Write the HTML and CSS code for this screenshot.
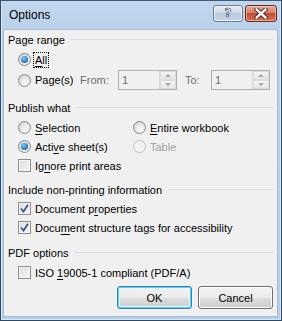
FILE: index.html
```html
<!DOCTYPE html>
<html>
<head>
<meta charset="utf-8">
<link rel="stylesheet" href="styles.css">
</head>
<body>
<div class="window">
  <div class="titlebar">
    <span class="title">Options</span>
    <div class="tbtns">
      <div class="tbtn help"><span class="qglyph">?</span></div>
      <div class="tbtn close">
        <svg width="14" height="11" viewBox="0 0 14 11"><path d="M2.5 1.5 L11.5 9.5 M11.5 1.5 L2.5 9.5" stroke="#4a1a12" stroke-width="4.2" stroke-linecap="square"/><path d="M2.5 1.5 L11.5 9.5 M11.5 1.5 L2.5 9.5" stroke="#fff" stroke-width="2.4" stroke-linecap="square"/></svg>
      </div>
    </div>
  </div>
  <div class="client">
    <div class="ghead g1"><span>Page range</span><i></i></div>
    <div class="row ind"><span class="radio on"></span><span class="lbl focus"><u>A</u>ll</span></div>
    <div class="row ind pages">
      <span class="radio"></span><span class="lbl w-pages">Page(s)</span>
      <span class="dis w-from">From:</span>
      <span class="spin"><span class="val">1</span><span class="arrows"><b class="up"></b><b class="dn"></b></span></span>
      <span class="dis w-to">To:</span>
      <span class="spin"><span class="val">1</span><span class="arrows"><b class="up"></b><b class="dn"></b></span></span>
    </div>
    <div class="ghead g2"><span>Publish what</span><i></i></div>
    <div class="grid ind">
      <div class="row"><span class="radio"></span><span class="lbl"><u>S</u>election</span></div>
      <div class="row"><span class="radio"></span><span class="lbl"><u>E</u>ntire workbook</span></div>
      <div class="row"><span class="radio on"></span><span class="lbl">Acti<u>v</u>e sheet(s)</span></div>
      <div class="row"><span class="radio disabled"></span><span class="lbl dis2">Table</span></div>
    </div>
    <div class="row ind"><span class="check"></span><span class="lbl">Ig<u>n</u>ore print areas</span></div>
    <div class="ghead g3"><span>Include non-printing information</span><i></i></div>
    <div class="row ind"><span class="check on"><svg width="9" height="9" viewBox="0 0 9 9"><path d="M1 4.5 L3.5 7.5 L8 0.8" fill="none" stroke="#3b4f8a" stroke-width="1.7"/></svg></span><span class="lbl">Document p<u>r</u>operties</span></div>
    <div class="row ind"><span class="check on"><svg width="9" height="9" viewBox="0 0 9 9"><path d="M1 4.5 L3.5 7.5 L8 0.8" fill="none" stroke="#3b4f8a" stroke-width="1.7"/></svg></span><span class="lbl">Docu<u>m</u>ent structure tags for accessibility</span></div>
    <div class="ghead g4"><span>PDF options</span><i></i></div>
    <div class="row ind"><span class="check"></span><span class="lbl">ISO <u>1</u>9005-1 compliant (PDF/A)</span></div>
    <div class="buttons">
      <button class="btn default">OK</button>
      <button class="btn">Cancel</button>
    </div>
  </div>
</div>
</body>
</html>
```

FILE: styles.css
```css
html, body { margin: 0; padding: 0; background: #fff; }
body { font-family: "Liberation Sans", Arial, sans-serif; font-size: 11px; color: #000; }
.window {
  width: 282px; height: 321px; box-sizing: border-box;
  border: 1px solid #2f4a66;
  border-top-color: #3d5c7c;
  background: linear-gradient(#c2d7ed, #b9d1ea 30px, #b6cfe9);
  padding: 0 3px 3px 2px;
  display: flex; flex-direction: column;
  box-shadow: inset 1px 0 0 #d9e7f5, inset -1px 0 0 #d9e7f5, inset 0 -1px 0 #d9e7f5;
}
.titlebar { height: 28px; display: flex; align-items: flex-start; position: relative; }
.title { margin: 6px 0 0 6px; font-size: 12px; color: #000; line-height: 16px; }
.tbtns { margin-left: auto; margin-top: 4px; margin-right: 1px; display: flex; gap: 2px; }
.tbtn { height: 17px; border-radius: 3px; display: flex; align-items: center; justify-content: center; box-sizing: border-box; }
.help { width: 30px; border: 1px solid #6b7f98; background: linear-gradient(#e3ebf4, #cfdbe9 45%, #b9c9dc 50%, #c7d6e7); box-shadow: inset 0 0 0 1px rgba(255,255,255,0.6); }
.qglyph { font-family: "DejaVu Sans", sans-serif; font-weight: bold; font-size: 12px; color: #fff; line-height: 13px; -webkit-text-stroke: 0.6px #394a60; }
.close { width: 32px; border: 1px solid #6d2b21; background: linear-gradient(#e9a99b, #d47f6b 45%, #c14d35 50%, #d6725a); box-shadow: inset 0 0 0 1px rgba(255,220,210,0.5); }
.client {
  flex: 1; background: #f0f0f0; border: 1px solid #a6bdd5;
  padding: 0 4px 0 4px; display: flex; flex-direction: column;
}
.ghead { height: 19px; display: flex; align-items: center; color: #000; }
.ghead i { flex: 1; height: 1px; background: #d5dfe5; margin-left: 6px; }
.g1 { margin-top: 0; }
.g2 { margin-top: 8px; }
.g3 { margin-top: 5px; }
.g4 { margin-top: 6px; }
.row { height: 19px; display: flex; align-items: center; }
.ind { padding-left: 10px; }
.g1 + .row { margin-top: 1px; }
.pages { height: 20px; margin-top: 1px; }
.g2 + .grid { margin-top: 1px; }
.g4 + .row { margin-top: 1px; }
.grid { display: grid; grid-template-columns: 115px 1fr; }
.lbl { margin-left: 4px; line-height: 14px; white-space: nowrap; }
.focus { outline: 1px dotted #000; outline-offset: 0; padding: 0 1px; margin-left: 3px; }
.radio {
  width: 13px; height: 13px; box-sizing: border-box; border-radius: 50%; flex: none;
  border: 1px solid #8a8a8a;
  background: radial-gradient(circle at 60% 65%, #fafafa 0, #e8e8e8 45%, #cfcfcf 80%);
  position: relative;
}
.radio.on::after {
  content: ""; position: absolute; left: 2px; top: 2px; width: 7px; height: 7px; border-radius: 50%;
  background: radial-gradient(circle at 40% 35%, #8ad0f6 0, #3a8fd0 45%, #0e4c8c 100%);
}
.radio.disabled { border-color: #c4c4c4; background: #f2f2f2; }
.check {
  width: 13px; height: 13px; box-sizing: border-box; flex: none; border: 1px solid #8e8f8f;
  background: linear-gradient(135deg, #dcdcdc, #f6f6f6);
  box-shadow: inset 0 0 0 1px #f4f4f4;
  display: flex; align-items: center; justify-content: center;
}
.dis { color: #6d6d6d; }
.dis2 { color: #a0a0a0; }
.w-pages { width: 45px; }
.w-from { width: 38px; }
.w-to { width: 26px; margin-left: 8px; }
.spin {
  width: 59px; height: 20px; box-sizing: border-box; border: 1px solid #afafaf; background: #f0f0f0;
  display: flex; align-items: stretch; flex: none;
}
.spin .val { flex: 1; color: #6d6d6d; padding-left: 3px; line-height: 18px; }
.arrows { width: 16px; display: flex; flex-direction: column; border-left: 1px solid #d9d9d9; }
.arrows b { flex: 1; position: relative; background: linear-gradient(#f4f4f4, #e6e6e6); border: 1px solid #dcdcdc; }
.arrows b::after { content: ""; position: absolute; left: 4px; width: 0; height: 0; border-left: 3px solid transparent; border-right: 3px solid transparent; }
.arrows .up::after { top: 2px; border-bottom: 3px solid #a8a8a8; }
.arrows .dn::after { top: 2px; border-top: 3px solid #a8a8a8; }
.buttons { margin-top: 4px; display: flex; justify-content: flex-end; gap: 6px; }
.btn {
  width: 75px; height: 23px; box-sizing: border-box; font: inherit; color: #000;
  border: 1px solid #707070; border-radius: 3px;
  background: linear-gradient(#f2f2f2, #ebebeb 50%, #dddddd 51%, #cfcfcf);
  box-shadow: inset 0 0 0 1px #fcfcfc; padding: 0;
}
.btn.default { border-color: #3c7fb1; box-shadow: inset 0 0 0 1px #48d5f7, inset 0 0 0 2px #eaf7fd; background: linear-gradient(#f2f2f2, #ebebeb 50%, #dddddd 51%, #cfcfcf); }
u { text-decoration: underline; text-underline-offset: 2px; }
```
